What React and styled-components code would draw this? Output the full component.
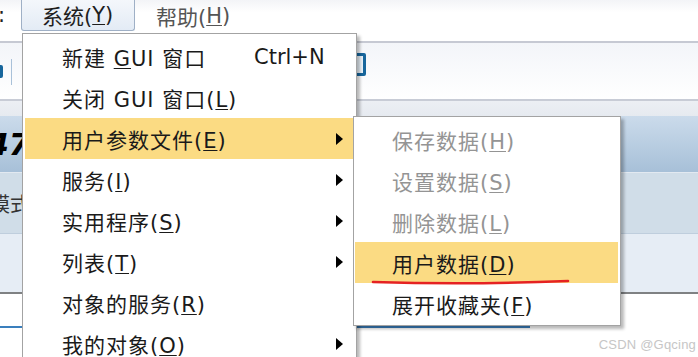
import React from 'react';
import styled, { createGlobalStyle } from 'styled-components';

const GlobalStyle = createGlobalStyle`
  html, body {
    margin: 0;
    padding: 0;
    background: #fff;
  }
  body {
    font-family: "DejaVu Sans", "Noto Sans CJK SC", sans-serif;
  }
`;

const Screen = styled.div`
  position: relative;
  width: 698px;
  height: 357px;
  overflow: hidden;
  display: flex;
  flex-direction: column;
  font-family: "DejaVu Sans", "Noto Sans CJK SC", sans-serif;
`;

/* menu bar */
const MenuBar = styled.div`
  height: 41px;
  display: flex;
  align-items: flex-start;
  background: linear-gradient(#f3f4f7, #fff 30%);
  border-bottom: 2px solid #c6c9d3;
  font-size: 21px;
  color: #222;
`;

const Colon = styled.span`
  width: 23px;
  margin-left: -2px;
  line-height: 30px;
`;

const MenuTitle = styled.div`
  height: 31px;
  box-sizing: border-box;
  display: flex;
  align-items: center;
  padding: 0 ${p => (p.$active ? '20px' : '0')};
  margin-right: ${p => (p.$active ? '21px' : '0')};
  width: ${p => (p.$active ? '114px' : 'auto')};
  color: ${p => (p.$active ? '#1e1e1e' : '#555')};
  background: ${p => (p.$active ? 'linear-gradient(#f4f7fb, #e3ebf5)' : 'transparent')};
  border: ${p => (p.$active ? '1px solid #9fb0c6' : 'none')};
  border-top: none;
  border-radius: 0 0 3px 3px;
`;

const U = styled.span`
  text-decoration: underline;
  text-underline-offset: 2px;
  text-decoration-thickness: 1px;
`;

/* toolbar */
const Toolbar = styled.div`
  height: 56px;
  display: flex;
  align-items: center;
  background: linear-gradient(#f3f5f9, #fff);
  border-bottom: 2px solid #c8ccd6;
`;

const ToolIcon = styled.div`
  width: ${p => p.$w}px;
  height: ${p => p.$h}px;
  box-sizing: border-box;
  border: 3px solid #17669c;
  background: #e8f1f8;
  margin-left: ${p => p.$ml}px;
  margin-top: ${p => p.$mt}px;
  border-radius: 2px;
`;

const ToolSep = styled.div`
  width: 1px;
  height: 26px;
  background: #a9c1d9;
  margin-left: 8px;
  margin-top: 2px;
`;

const SubBand = styled.div`
  height: 15px;
  background: linear-gradient(#eceff4, #e6eaf0);
`;

const TitleBand = styled.div`
  height: 56px;
  display: flex;
  align-items: center;
  background: linear-gradient(#cbdbeb, #a7c0d8);
  border-bottom: 1px solid #e2e9f1;
`;

const BigNum = styled.span`
  font-family: "DejaVu Sans", sans-serif;
  font-weight: bold;
  font-style: italic;
  font-size: 30px;
  margin-left: -12px;
  color: #000;
`;

const ModeRow = styled.div`
  height: 60px;
  display: flex;
  align-items: center;
  background: #d0dde8;
  border-bottom: 1px solid #bfcedd;
  font-family: "Noto Sans CJK SC", sans-serif;
  font-size: 20px;
  color: #333;

  span {
    margin-left: -10px;
  }
`;

const DataRow = styled.div`
  height: 58px;
  background: #e6edf5;
  border-bottom: 2px solid #7f8183;
`;

const WhiteArea = styled.div`
  flex: 1;
  background: #fff;
  padding-top: 32px;
`;

const FocusLine = styled.div`
  width: 530px;
  height: 2px;
  background: #3a7fbd;
`;

/* dropdown menus */
const Dropdown = styled.div`
  position: absolute;
  left: ${p => p.$left}px;
  top: ${p => p.$top}px;
  width: ${p => p.$width}px;
  box-sizing: border-box;
  background: #fff;
  border: 1px solid #a3a3a3;
  box-shadow: 3px 3px 3px rgba(0, 0, 0, 0.28);
  padding: ${p => p.$pad};
  font-size: 21px;
  letter-spacing: 1px;
  z-index: ${p => p.$z};
`;

const Item = styled.div`
  height: 41px;
  display: flex;
  align-items: center;
  padding-left: 37px;
  padding-right: 10px;
  color: ${p => (p.$disabled ? '#949494' : '#1a1a1a')};
  background: ${p => (p.$hot ? '#fbdb83' : 'transparent')};
`;

const Label = styled.span`
  flex: 1;
  white-space: pre;
`;

const Shortcut = styled.span`
  width: 89px;
  letter-spacing: 0;
`;

const Arrow = styled.span`
  width: 0;
  height: 0;
  border-top: 6px solid transparent;
  border-bottom: 6px solid transparent;
  border-left: 7px solid #000;
`;

const Scribble = styled.svg`
  position: absolute;
  left: 370px;
  top: 276px;
  z-index: 5;
`;

const Watermark = styled.div`
  position: absolute;
  right: 2px;
  bottom: 5px;
  font-family: "Liberation Sans", sans-serif;
  font-size: 13px;
  color: #c6c6c6;
  letter-spacing: 0.2px;
`;

const mainItems = [
  { label: '新建 ', mn: 'G', rest: 'UI 窗口', shortcut: 'Ctrl+N' },
  { label: '关闭 GUI 窗口(', mn: 'L', rest: ')' },
  { label: '用户参数文件(', mn: 'E', rest: ')', sub: true, hot: true },
  { label: '服务(', mn: 'I', rest: ')', sub: true },
  { label: '实用程序(', mn: 'S', rest: ')', sub: true },
  { label: '列表(', mn: 'T', rest: ')', sub: true },
  { label: '对象的服务(', mn: 'R', rest: ')' },
  { label: '我的对象(', mn: 'O', rest: ')', sub: true },
];

const subItems = [
  { label: '保存数据(', mn: 'H', rest: ')', disabled: true },
  { label: '设置数据(', mn: 'S', rest: ')', disabled: true },
  { label: '删除数据(', mn: 'L', rest: ')', disabled: true },
  { label: '用户数据(', mn: 'D', rest: ')', hot: true },
  { label: '展开收藏夹(', mn: 'F', rest: ')' },
];

const MenuItem = ({ item }) => (
  <Item $hot={item.hot} $disabled={item.disabled}>
    <Label>
      {item.label}
      <U>{item.mn}</U>
      {item.rest}
    </Label>
    {item.shortcut && <Shortcut>{item.shortcut}</Shortcut>}
    {item.sub && <Arrow />}
  </Item>
);

export default function App() {
  return (
    <>
      <GlobalStyle />
      <Screen>
        <MenuBar>
          <Colon>:</Colon>
          <MenuTitle $active>
            系统(<U>Y</U>)
          </MenuTitle>
          <MenuTitle>
            帮助(<U>H</U>)
          </MenuTitle>
        </MenuBar>
        <Toolbar>
          <ToolIcon $w={20} $h={13} $ml={-17} $mt={0} />
          <ToolSep />
          <ToolIcon $w={22} $h={23} $ml={332} $mt={-14} />
        </Toolbar>
        <SubBand />
        <TitleBand>
          <BigNum>47</BigNum>
        </TitleBand>
        <ModeRow>
          <span>模式</span>
        </ModeRow>
        <DataRow />
        <WhiteArea>
          <FocusLine />
        </WhiteArea>

        <Dropdown $left={22} $top={33} $width={335} $pad="2px 3px 0 2px" $z={2}>
          {mainItems.map((it, i) => (
            <MenuItem key={i} item={it} />
          ))}
        </Dropdown>

        <Dropdown $left={353} $top={116} $width={268} $pad="2px 2px 1px 1px" $z={3}>
          {subItems.map((it, i) => (
            <MenuItem key={i} item={it} />
          ))}
        </Dropdown>

        <Scribble width="202" height="12" viewBox="0 0 202 12">
          <path d="M3 6 Q100 9 198 5" stroke="#e52222" strokeWidth="2.6" fill="none" strokeLinecap="round" />
        </Scribble>

        <Watermark>CSDN @Gqcing</Watermark>
      </Screen>
    </>
  );
}
